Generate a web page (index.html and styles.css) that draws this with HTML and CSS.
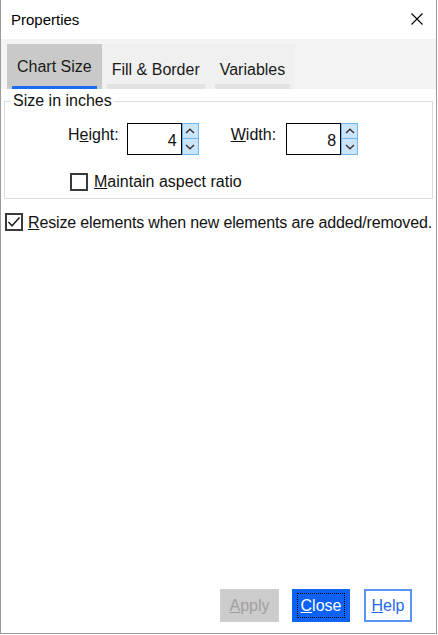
FILE: index.html
```html
<!DOCTYPE html>
<html>
<head>
<meta charset="utf-8">
<title>Properties</title>
<link rel="stylesheet" href="styles.css">
</head>
<body>
<div class="window">
  <div class="titlebar">
    <span class="title">Properties</span>
    <svg class="close-icon" width="12" height="12" viewBox="0 0 12 12"><path d="M0.5 0.5 L11.5 11.5 M11.5 0.5 L0.5 11.5" stroke="#000" stroke-width="1.1" fill="none"/></svg>
  </div>
  <div class="tabstrip">
    <div class="tab tab-active"><span class="tab-label">Chart Size</span></div>
    <div class="tab"><span class="tab-label">Fill &amp; Border</span></div>
    <div class="tab"><span class="tab-label">Variables</span></div>
  </div>
  <div class="content">
    <fieldset class="group">
      <legend class="group-title">Size in inches</legend>
      <div class="size-row">
        <span class="field-label label-height">H<u>e</u>ight:</span>
        <div class="spinbox">
          <div class="spin-input">4</div>
          <div class="spin-btns">
            <div class="spin-btn spin-up"><svg width="10" height="6" viewBox="0 0 10 6"><path d="M1 5 L5 1.3 L9 5" stroke="#333" stroke-width="1.4" fill="none"/></svg></div>
            <div class="spin-btn spin-down"><svg width="10" height="6" viewBox="0 0 10 6"><path d="M1 1 L5 4.7 L9 1" stroke="#333" stroke-width="1.4" fill="none"/></svg></div>
          </div>
        </div>
        <span class="field-label label-width"><u>W</u>idth:</span>
        <div class="spinbox">
          <div class="spin-input">8</div>
          <div class="spin-btns">
            <div class="spin-btn spin-up"><svg width="10" height="6" viewBox="0 0 10 6"><path d="M1 5 L5 1.3 L9 5" stroke="#333" stroke-width="1.4" fill="none"/></svg></div>
            <div class="spin-btn spin-down"><svg width="10" height="6" viewBox="0 0 10 6"><path d="M1 1 L5 4.7 L9 1" stroke="#333" stroke-width="1.4" fill="none"/></svg></div>
          </div>
        </div>
      </div>
      <div class="check-row check-aspect">
        <span class="checkbox"></span>
        <span class="check-text"><u>M</u>aintain aspect ratio</span>
      </div>
    </fieldset>
    <div class="check-row check-resize">
      <span class="checkbox"><svg width="14" height="14" viewBox="0 0 14 14"><path d="M1.5 7 L5 10.8 L12.5 2.5" stroke="#222" stroke-width="1.5" fill="none"/></svg></span>
      <span class="check-text"><u>R</u>esize elements when new elements are added/removed.</span>
    </div>
  </div>
  <div class="footer">
    <div class="btn btn-disabled"><u>A</u>pply</div>
    <div class="btn btn-primary"><u>C</u>lose</div>
    <div class="btn btn-outline"><u>H</u>elp</div>
  </div>
</div>
</body>
</html>
```
FILE: styles.css
```css
html, body {
  margin: 0;
  padding: 0;
  background: #ffffff;
}
body {
  font-family: "Liberation Sans", Arial, sans-serif;
  font-size: 16px;
  line-height: 18px;
  color: #111;
}
.window {
  width: 437px;
  height: 634px;
  box-sizing: border-box;
  border: 1px solid #9c9c9c;
  border-top: none;
  background: #fff;
  display: flex;
  flex-direction: column;
  overflow: hidden;
}
.titlebar {
  height: 39px;
  flex: none;
  display: flex;
  align-items: flex-start;
  justify-content: space-between;
  padding: 11px 13px 0 10px;
  box-sizing: border-box;
  background: #fff;
}
.title {
  font-size: 15px;
  line-height: 17px;
  color: #000;
}
.close-icon {
  margin-top: 2px;
}
.tabstrip {
  height: 50px;
  flex: none;
  box-sizing: border-box;
  padding: 5px 0 0 6px;
  background: #f4f4f4;
  display: flex;
  align-items: flex-start;
}
.tab {
  padding: 0 5px;
  background: #f0f0f0;
}
.tab-active {
  background: #c9c9c9;
}
.tab-label {
  display: block;
  padding: 17px 5px 5px;
  border-bottom: 5px solid #e2e2e2;
  white-space: nowrap;
  color: #1a1a1a;
}
.tab-active .tab-label {
  padding-top: 14px;
  padding-bottom: 10px;
  border-bottom: 3px solid #1c6cf2;
}
.content {
  flex: 1;
  background: #fff;
}
.group {
  margin: 3px 0 0 3px;
  width: 429px;
  box-sizing: border-box;
  padding: 0 0 7px 6px;
  border: 1px solid #dcdcdc;
  min-width: 0;
}
.group-title {
  padding: 0 2px;
  color: #111;
}
.size-row {
  display: flex;
  align-items: flex-start;
  margin-top: 13px;
  padding-left: 57px;
}
.field-label {
  padding-top: 3px;
  white-space: nowrap;
}
.label-height {
  margin-right: 8px;
}
.label-width {
  margin-left: 32px;
  margin-right: 10px;
}
.spinbox {
  display: flex;
  height: 32px;
}
.spin-input {
  width: 55px;
  height: 32px;
  box-sizing: border-box;
  border: 1px solid #000;
  text-align: right;
  padding: 8px 4px 0 0;
  background: #fff;
}
.spin-btns {
  display: flex;
  flex-direction: column;
  width: 17px;
}
.spin-btn {
  height: 16px;
  box-sizing: border-box;
  border: 1px solid #6fb5ee;
  background: #cce4f7;
  display: flex;
  align-items: center;
  justify-content: center;
}
.spin-down {
  border-top: none;
}
.check-row {
  display: flex;
  align-items: flex-start;
}
.check-aspect {
  margin-top: 18px;
  padding-left: 59px;
}
.check-resize {
  margin: 14px 0 0 4px;
}
.checkbox {
  width: 18px;
  height: 18px;
  box-sizing: border-box;
  border: 2px solid #3a3a3a;
  background: #fff;
  flex: none;
  display: flex;
  align-items: center;
  justify-content: center;
}
.check-aspect .check-text {
  margin-left: 6px;
}
.check-resize .check-text {
  margin-left: 5px;
  padding-top: 1px;
  white-space: nowrap;
  letter-spacing: -0.15px;
}
.footer {
  flex: none;
  display: flex;
  justify-content: flex-end;
  padding: 0 24px 11px 0;
}
.btn {
  height: 33px;
  box-sizing: border-box;
  display: flex;
  align-items: center;
  justify-content: center;
  position: relative;
}
.btn-disabled {
  width: 59px;
  background: #cccccc;
  border: 1px solid #cfcfcf;
  color: #a0a0a0;
}
.btn-primary {
  width: 58px;
  margin-left: 13px;
  background: #0b62f5;
  color: #fff;
  border: 1px solid #0b62f5;
}
.btn-primary::after {
  content: "";
  position: absolute;
  top: 3px;
  bottom: 3px;
  left: 4px;
  right: 4px;
  border: 1px dotted #000;
}
.btn-outline {
  width: 48px;
  margin-left: 14px;
  background: #fff;
  border: 2px solid #5a93f3;
  color: #2467e8;
}
```
